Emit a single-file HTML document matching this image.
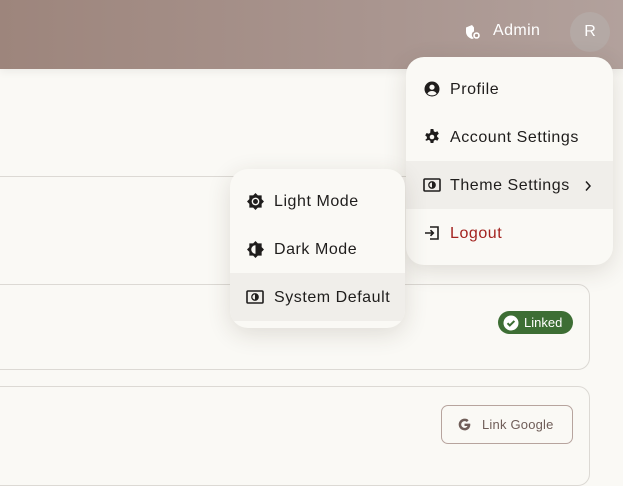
<!DOCTYPE html>
<html><head><style>
*{margin:0;padding:0;box-sizing:border-box}
body{width:623px;height:463px;overflow:hidden;background:#faf9f5;font-family:"Liberation Sans",sans-serif;position:relative;color:#1f1d1c}
.hdr{position:absolute;left:0;top:0;width:623px;height:69px;background:linear-gradient(90deg,#9d857c,#a9958f 60%,#b2a19c);box-shadow:0 3px 8px rgba(0,0,0,.06)}
.admin{position:absolute;left:493px;top:22px;color:#fff;font-size:16px;letter-spacing:.4px}
.av{position:absolute;left:570px;top:12px;width:40px;height:40px;border-radius:50%;background:#b4a9a5;color:#fff;font-size:16px;text-align:center;line-height:40px}
.line{position:absolute;left:0;width:406px;height:1px;background:#dcd9d4;top:176px}
.card{position:absolute;left:-20px;width:610px;border:1px solid #dcd9d4;border-radius:12px}
.menu{position:absolute;background:#faf9f5;border-radius:18px;box-shadow:0 6px 24px rgba(60,40,30,.14);overflow:hidden}
.it{position:absolute;left:0;right:0;height:48px;font-size:16px;line-height:50px;letter-spacing:.55px}
.it svg{position:absolute;top:16px}
.hl{background:#f0eeea}
.badge{position:absolute;left:498px;top:311px;width:75px;height:23px;border-radius:12px;background:#3d6e34;color:#fff;font-size:13px;line-height:23px;padding-left:26px}
.btn{position:absolute;left:441px;top:405px;width:132px;height:39px;border:1px solid #b7a49e;border-radius:7px;color:#6f5d58;font-size:13px;line-height:38px;padding-left:40px;letter-spacing:.2px}
</style></head><body>
<div class="hdr"></div>
<svg style="position:absolute;left:465px;top:24px" width="16" height="16" viewBox="0 0 16 16"><path d="M7 1L1 3.5V8c0 3.5 3 6 6 7 1-.3 1.5-.6 2-1a3.5 3.5 0 010-6.5V3.5z" fill="#fff"/><circle cx="11.5" cy="11.5" r="3.3" fill="#fff"/><circle cx="11.5" cy="11.5" r="1.6" fill="#a8948d"/></svg>
<div class="admin">Admin</div>
<div class="av">R</div>
<div class="line"></div>
<div class="card" style="top:284px;height:86px"></div>
<div class="card" style="top:386px;height:100px"></div>
<div class="badge">Linked</div>
<svg style="position:absolute;left:503px;top:315px" width="16" height="16" viewBox="0 0 16 16"><circle cx="8" cy="8" r="7.5" fill="#fff"/><path d="M4.5 8.2l2.3 2.3 4.6-4.6" stroke="#3d6e34" stroke-width="2" fill="none"/></svg>
<div class="btn">Link Google</div>
<svg style="position:absolute;left:457px;top:417px" width="15" height="15" viewBox="0 0 16 16"><path d="M14 7H8v2.6h3.3A3.6 3.6 0 118 4.4c1 0 1.8.3 2.5.9l1.9-1.9A6.3 6.3 0 108 14.3c3.5 0 6.2-2.5 6.2-6.2 0-.4 0-.8-.2-1.1z" fill="#6f5d58"/></svg>

<div class="menu" style="left:406px;top:57px;width:207px;height:208px">
 <div class="it" style="top:8px;padding-left:44px"><svg style="left:18px" width="16" height="16" viewBox="0 0 16 16"><circle cx="8" cy="8" r="7.5" fill="#1f1d1c"/><circle cx="8" cy="6.2" r="2.6" fill="#faf9f5"/><path d="M3.4 12.6c1-1.8 2.6-2.6 4.6-2.6s3.6.8 4.6 2.6A6 6 0 018 14.3a6 6 0 01-4.6-1.7z" fill="#faf9f5"/></svg>Profile</div>
 <div class="it" style="top:56px;padding-left:44px"><svg style="left:18px" width="16" height="16" viewBox="0 0 16 16"><path d="M6.6 0h2.8l.4 2.2 1.5.9 2.1-.8 1.4 2.4-1.7 1.5v1.6l1.7 1.5-1.4 2.4-2.1-.8-1.5.9-.4 2.2H6.6l-.4-2.2-1.5-.9-2.1.8L1.2 11l1.7-1.5V7.9L1.2 6.4l1.4-2.4 2.1.8 1.5-.9z" fill="#1f1d1c"/><circle cx="8" cy="8" r="2.3" fill="#faf9f5"/></svg>Account Settings</div>
 <div class="it hl" style="top:104px;padding-left:44px"><svg style="left:17px" width="18" height="16" viewBox="0 0 18 16"><rect x="1" y="2" width="16" height="12" rx="1" fill="none" stroke="#1f1d1c" stroke-width="1.6"/><circle cx="9" cy="8" r="3.2" fill="none" stroke="#1f1d1c" stroke-width="1.3"/><path d="M9 4.8a3.2 3.2 0 010 6.4z" fill="#1f1d1c"/></svg>Theme Settings<svg style="left:178px;top:19px" width="8" height="12" viewBox="0 0 8 12"><path d="M2 1.5L6 6 2 10.5" fill="none" stroke="#1f1d1c" stroke-width="1.5"/></svg></div>
 <div class="it" style="top:152px;padding-left:44px;color:#a3231f"><svg style="left:18px" width="16" height="16" viewBox="0 0 16 16"><path d="M6 2h8v12H6M1 8h8M6.5 5.2L9.3 8 6.5 10.8" fill="none" stroke="#1f1d1c" stroke-width="1.6"/></svg>Logout</div>
</div>

<div class="menu" style="left:230px;top:169px;width:175px;height:159px">
 <div class="it" style="top:8px;padding-left:44px"><svg style="left:17px" width="17" height="17" viewBox="0 0 16 16"><path d="M8 0l2.2 2.2h3.6v3.6L16 8l-2.2 2.2v3.6h-3.6L8 16l-2.2-2.2H2.2v-3.6L0 8l2.2-2.2V2.2h3.6z" fill="#1f1d1c"/><circle cx="8" cy="8" r="3.6" fill="#faf9f5"/><circle cx="8" cy="8" r="2.3" fill="#1f1d1c"/></svg>Light Mode</div>
 <div class="it" style="top:56px;padding-left:44px"><svg style="left:17px" width="17" height="17" viewBox="0 0 16 16"><path d="M8 0l2.2 2.2h3.6v3.6L16 8l-2.2 2.2v3.6h-3.6L8 16l-2.2-2.2H2.2v-3.6L0 8l2.2-2.2V2.2h3.6z" fill="#1f1d1c"/><path d="M8 4a4 4 0 000 8z" fill="#faf9f5"/></svg>Dark Mode</div>
 <div class="it hl" style="top:104px;padding-left:44px"><svg style="left:16px" width="18" height="16" viewBox="0 0 18 16"><rect x="1" y="2" width="16" height="12" rx="1" fill="none" stroke="#1f1d1c" stroke-width="1.6"/><circle cx="9" cy="8" r="3.2" fill="none" stroke="#1f1d1c" stroke-width="1.3"/><path d="M9 4.8a3.2 3.2 0 010 6.4z" fill="#1f1d1c"/></svg>System Default</div>
</div>
</body></html>
